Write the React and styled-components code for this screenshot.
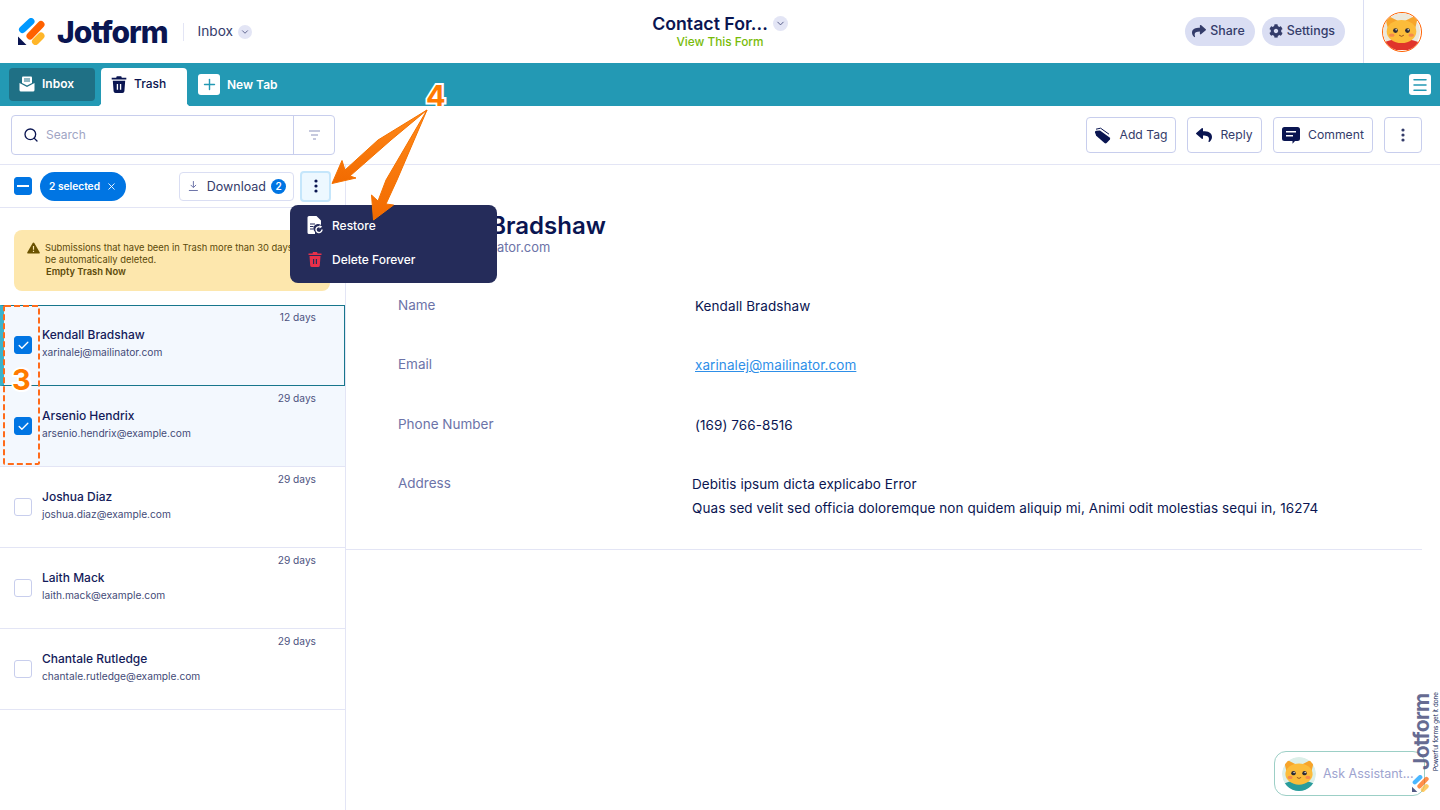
import React from "react";
import styled, { createGlobalStyle } from "styled-components";
import { FaShare, FaCog, FaReply } from "react-icons/fa";
import { Search, X, Check, ChevronDown, Plus, Menu } from "lucide-react";

const navy = "#0a1551";
const font = `Inter, "Liberation Sans", sans-serif`;

const GlobalStyle = createGlobalStyle`
  html, body { margin: 0; padding: 0; height: 100%; overflow: hidden; background: #fff; }
  body { font-family: ${font}; color: ${navy}; }
  * { box-sizing: border-box; }
  #root { height: 100%; }
`;

const submissions = [
  { name: "Kendall Bradshaw", email: "xarinalej@mailinator.com", age: "12 days", checked: true, active: true },
  { name: "Arsenio Hendrix", email: "arsenio.hendrix@example.com", age: "29 days", checked: true },
  { name: "Joshua Diaz", email: "joshua.diaz@example.com", age: "29 days" },
  { name: "Laith Mack", email: "laith.mack@example.com", age: "29 days" },
  { name: "Chantale Rutledge", email: "chantale.rutledge@example.com", age: "29 days" },
];

const LogoMark = ({ size = 27 }) => (
  <svg width={size} height={size} viewBox="0 0 27 27">
    <path d="M0 18.5 V27 H8.5 Z" fill={navy} />
    <path d="M4.5 11.5 L13 3.5" stroke="#0099ff" strokeWidth="7" strokeLinecap="round" />
    <path d="M12 18 L23 6.5" stroke="#ff6100" strokeWidth="7" strokeLinecap="round" />
    <path d="M17.5 23.5 L23 18" stroke="#ffb629" strokeWidth="7" strokeLinecap="round" />
  </svg>
);

const CatFace = ({ size, shirt, bg }) => (
  <svg width={size} height={size} viewBox="0 0 40 40">
    <circle cx="20" cy="20" r="20" fill={bg} />
    <path d="M0 40 V33 Q6 28 20 28 Q34 28 40 33 V40 Z" fill={shirt} />
    <path d="M3 3 L15 9 L7 20 Z" fill="#f7a52b" stroke="#f7a52b" strokeWidth="2" strokeLinejoin="round" />
    <path d="M37 3 L25 9 L33 20 Z" fill="#f7a52b" stroke="#f7a52b" strokeWidth="2" strokeLinejoin="round" />
    <ellipse cx="20" cy="20" rx="16" ry="12.5" fill="#fcbc3a" />
    <circle cx="13.5" cy="19" r="2.6" fill="#2c2a33" />
    <circle cx="26.5" cy="19" r="2.6" fill="#2c2a33" />
    <circle cx="14.2" cy="18.2" r=".8" fill="#fff" />
    <circle cx="27.2" cy="18.2" r=".8" fill="#fff" />
    <ellipse cx="9.5" cy="24" rx="3" ry="1.8" fill="#f58a4b" />
    <ellipse cx="30.5" cy="24" rx="3" ry="1.8" fill="#f58a4b" />
    <path d="M17.5 24 Q20 26.5 22.5 24" stroke="#8a4a1c" strokeWidth="1" fill="none" />
  </svg>
);

const TrashIcon = ({ color, size = 18 }) => (
  <svg width={size} height={size} viewBox="0 0 16 16">
    <path d="M1.5 2.5 H5.5 L6 1 H10 L10.5 2.5 H14.5 V4 H1.5 Z" fill={color} />
    <path fillRule="evenodd" d="M2.5 5 H13.5 L12.8 14.5 Q12.7 16 11 16 H5 Q3.3 16 3.2 14.5 Z M6 8 V13 H7.2 V8 Z M8.8 8 V13 H10 V8 Z" fill={color} />
  </svg>
);

const InboxIcon = () => (
  <svg width="16" height="16" viewBox="0 0 16 16">
    <path d="M3 1.5 Q3 .5 4 .5 H12 Q13 .5 13 1.5 V7 L8 9.5 L3 7 Z" fill="#fff" />
    <path d="M5 3 H11 M5 5 H11" stroke="#1f7085" strokeWidth="1.1" />
    <path d="M.5 7 L8 11 L15.5 7 V14 Q15.5 15.5 14 15.5 H2 Q.5 15.5 .5 14 Z" fill="#fff" />
  </svg>
);

const RestoreIcon = () => (
  <svg width="16" height="18" viewBox="0 0 16 18">
    <path d="M2 0 H9.5 L14 4.5 V9 A4.5 4.5 0 0 0 8 16 V18 H2 Q0.5 18 0.5 16.5 V1.5 Q0.5 0 2 0 Z" fill="#fff" />
    <path d="M3 8 H8 M3 10.5 H6.5 M3 13 H6.5" stroke="#252c5a" strokeWidth="1.2" />
    <path d="M15 13.5 A3 3 0 1 1 13.5 11" stroke="#fff" strokeWidth="1.4" fill="none" />
    <path d="M12.5 9 L15.2 10.8 L12.5 12.6 Z" fill="#fff" />
  </svg>
);

const TagIcon = () => (
  <svg width="17" height="17" viewBox="0 0 17 17" fill={navy}>
    <path d="M1 5.5 Q.7 4 2.2 3.8 L6 3.5 L15.6 10.6 Q16.6 11.6 15.9 12.6 L12.6 16 Q11.6 16.9 10.5 16 L2.2 8.8 Z" />
    <path d="M2 2.2 L6.6 1.2 L15 7.2" fill="none" stroke={navy} strokeWidth="1" />
  </svg>
);

const CommentIcon = () => (
  <svg width="18" height="17" viewBox="0 0 18 17" fill={navy}>
    <path fillRule="evenodd" d="M2.5 0 H15.5 Q18 0 18 2.5 V11.5 Q18 14 15.5 14 H13 L10.5 16.8 V14 H2.5 Q0 14 0 11.5 V2.5 Q0 0 2.5 0 Z M4 4 V5.6 H14 V4 Z M4 8 V9.6 H11 V8 Z" />
  </svg>
);

const DownloadIcon = () => (
  <svg width="12" height="12" viewBox="0 0 12 12" fill="none" stroke="#6c73a8" strokeWidth="1.1">
    <path d="M6 0.5 V7.5 M3 4.8 L6 7.8 L9 4.8" />
    <path d="M1 11 H11" />
  </svg>
);

const FilterIcon = () => (
  <svg width="13" height="10" viewBox="0 0 13 10" fill="none" stroke="#8d93bd" strokeWidth="1.2">
    <path d="M1 1 H12 M3 5 H10 M5 9 H8" />
  </svg>
);

const WarningIcon = () => (
  <svg width="13" height="12" viewBox="0 0 13 12">
    <path fillRule="evenodd" d="M6.5 0.5 Q7 0.5 7.3 1 L12.8 10.5 Q13 11.5 12.2 11.5 H0.8 Q0 11.5 0.2 10.5 L5.7 1 Q6 0.5 6.5 0.5 Z M5.9 4 V7.8 H7.1 V4 Z M5.9 8.8 V10 H7.1 V8.8 Z" fill="#6a5200" />
  </svg>
);

const Dots = ({ color = navy }) => (
  <svg width="4" height="14" viewBox="0 0 4 14" fill={color}>
    <circle cx="2" cy="2" r="1.6" />
    <circle cx="2" cy="7" r="1.6" />
    <circle cx="2" cy="12" r="1.6" />
  </svg>
);

const Page = styled.div`
  position: relative;
  height: 810px;
  width: 1440px;
  display: flex;
  flex-direction: column;
  overflow: hidden;
`;

const Header = styled.header`
  height: 63px;
  display: grid;
  grid-template-columns: 1fr auto 1fr;
  align-items: center;
  background: #fff;
`;

const Brand = styled.div`
  display: flex;
  align-items: center;
  padding-left: 18px;
`;

const Wordmark = styled.span`
  font-size: 30px;
  font-weight: 800;
  letter-spacing: -1px;
  margin-left: 12px;
  color: ${navy};
`;

const BrandDivider = styled.span`
  width: 1px;
  height: 18px;
  background: #e3e5f5;
  margin: 0 14px 0 15px;
`;

const HeaderLabel = styled.span`
  font-size: 13.7px;
  line-height: 16px;
  padding-bottom: 2px;
  color: #343c6a;
`;

const ChevronDot = styled.span`
  width: ${p => p.$size}px;
  height: ${p => p.$size}px;
  border-radius: 50%;
  background: #e3e5f5;
  margin-left: 5px;
  display: inline-flex;
  align-items: center;
  justify-content: center;
  color: #4c5280;
`;

const FormTitle = styled.div`
  display: flex;
  flex-direction: column;
  align-items: center;
  margin-top: -4px;
`;

const TitleRow = styled.div`
  display: flex;
  align-items: center;
  font-size: 17.7px;
  font-weight: 600;
  line-height: 24px;
  color: ${navy};
`;

const ViewLink = styled.a`
  font-size: 11.8px;
  line-height: 12px;
  font-weight: 500;
  color: #78bb07;
`;

const HeaderRight = styled.div`
  display: flex;
  align-items: center;
  justify-content: flex-end;
  height: 100%;
`;

const Pill = styled.button`
  height: 29px;
  padding: 0 10px 2px 7px;
  margin-left: 7px;
  border: 0;
  border-radius: 15px;
  background: #dadef3;
  color: #343c6a;
  font-family: inherit;
  font-size: 12.4px;
  font-weight: 500;
  display: flex;
  align-items: center;
  gap: 4px;
`;

const AvatarCell = styled.div`
  height: 100%;
  margin-left: 18px;
  padding: 12px 18px 0 18px;
  border-left: 1px solid #dadef3;
`;

const Avatar = styled.div`
  width: 40px;
  height: 40px;
  border-radius: 50%;
  border: 1.5px solid #ff6100;
  overflow: hidden;
  line-height: 0;
`;

const TabBar = styled.nav`
  height: 43px;
  background: #2399b4;
  display: flex;
  align-items: flex-start;
  padding: 5px 9px 0;
  font-size: 12px;
  font-weight: 600;
`;

const Tab = styled.div`
  position: relative;
  width: 86px;
  height: ${p => (p.$open ? 38 : 33)}px;
  margin-right: 6px;
  border-radius: ${p => (p.$open ? "4px 4px 0 0" : "4px")};
  background: ${p => (p.$open ? "#fff" : "#1f7085")};
  color: ${p => (p.$open ? navy : "#fff")};
  padding-left: ${p => (p.$open ? 9 : 10)}px;
  padding-bottom: ${p => (p.$open ? 7 : 2)}px;
  display: flex;
  align-items: center;
  gap: ${p => (p.$open ? 6 : 7)}px;
  font-weight: ${p => (p.$open ? 500 : 600)};
  &::before,
  &::after {
    content: ${p => (p.$open ? '""' : "none")};
    position: absolute;
    bottom: 0;
    width: 4px;
    height: 4px;
  }
  &::before {
    left: -4px;
    background: radial-gradient(circle at 0 0, #2399b4 4px, #fff 4.5px);
  }
  &::after {
    right: -4px;
    background: radial-gradient(circle at 100% 0, #2399b4 4px, #fff 4.5px);
  }
`;

const NewTab = styled.div`
  display: flex;
  align-items: center;
  gap: 7px;
  height: 33px;
  margin-left: 5px;
  color: #fff;
`;

const WhiteSquare = styled.span`
  width: 22px;
  height: 21px;
  background: #fff;
  border-radius: 3px;
  color: #2399b4;
  display: inline-flex;
  align-items: center;
  justify-content: center;
`;

const TabMenu = styled(WhiteSquare)`
  margin: 6px 0 0 auto;
`;

const ToolRow = styled.div`
  height: 59px;
  border-bottom: 1px solid #e3e5f5;
  display: flex;
  align-items: center;
  justify-content: space-between;
  padding: 0 18px 0 11px;
`;

const SearchBox = styled.div`
  width: 324px;
  height: 40px;
  border: 1px solid #c8ceed;
  border-radius: 4px;
  display: flex;
  align-items: center;
  padding-left: 11px;
  gap: 7px;
  font-size: 12px;
  line-height: 14px;
  color: #a0a5c4;
`;

const SearchHint = styled.span`
  padding-bottom: 1px;
`;

const FilterCell = styled.span`
  margin-left: auto;
  width: 41px;
  height: 100%;
  border-left: 1px solid #c8ceed;
  display: flex;
  align-items: center;
  justify-content: center;
`;

const Actions = styled.div`
  display: flex;
  gap: 11px;
`;

const ActionButton = styled.button`
  width: ${p => p.$w}px;
  height: 36px;
  padding: 0;
  border: 1px solid #c8ceed;
  border-radius: 4px;
  background: #fff;
  color: #343c6a;
  font-family: inherit;
  font-size: 12.2px;
  line-height: 14px;
  display: flex;
  align-items: center;
  justify-content: center;
  gap: 8px;
`;

const ActionText = styled.span`
  padding-bottom: 1px;
`;

const Columns = styled.div`
  flex: 1;
  display: grid;
  grid-template-columns: 346px 1fr;
  min-height: 0;
`;

const Sidebar = styled.aside`
  border-right: 1px solid #e3e5f5;
`;

const SelectionBar = styled.div`
  height: 43px;
  border-bottom: 1px solid #e3e5f5;
  display: flex;
  align-items: center;
  padding: 0 14px;
`;

const Checkbox = styled.span`
  width: 18px;
  height: 18px;
  flex: none;
  border-radius: 3px;
  background: ${p => (p.$on ? "#0075e3" : "#fff")};
  border: 1px solid ${p => (p.$on ? "#0075e3" : "#c8ceed")};
  color: #fff;
  display: inline-flex;
  align-items: center;
  justify-content: center;
`;

const Dash = styled.span`
  width: 12px;
  height: 2px;
  background: #fff;
`;

const Chip = styled.span`
  margin-left: 8px;
  width: 86px;
  height: 29px;
  border-radius: 15px;
  background: #0075e3;
  color: #fff;
  font-size: 10.2px;
  font-weight: 600;
  display: flex;
  align-items: center;
  justify-content: center;
  gap: 6px;
`;

const DownloadButton = styled.button`
  margin-left: auto;
  width: 115px;
  height: 29px;
  border: 1px solid #dadef3;
  border-radius: 4px;
  background: #fff;
  color: #343c6a;
  font-family: inherit;
  font-size: 12.5px;
  display: flex;
  align-items: center;
  padding: 0 7px 0 8px;
  gap: 8px;
`;

const CountBadge = styled.span`
  width: 15px;
  height: 15px;
  flex: none;
  border-radius: 50%;
  background: #0075e3;
  color: #fff;
  font-size: 10px;
  font-weight: 600;
  margin-left: -3px;
  display: flex;
  align-items: center;
  justify-content: center;
`;

const MoreButton = styled.button`
  width: 31px;
  height: 31px;
  margin-left: 6px;
  border: 2px solid #c5e6fb;
  border-radius: 4px;
  background: #edf8ff;
  display: flex;
  align-items: center;
  justify-content: center;
  padding: 0;
`;

const Notice = styled.div`
  margin: 22px 15px 14px 14px;
  height: 61px;
  border-radius: 8px;
  background: #fde7ad;
  padding: 12px 16px 0 13px;
  display: flex;
  gap: 5px;
  font-size: 9.4px;
  line-height: 12px;
  color: #5c4a0a;
`;

const NoticeLink = styled.div`
  font-weight: 600;
  margin-left: 1px;
`;

const IconSlot = styled.span`
  flex: none;
`;

const Row = styled.div`
  position: relative;
  height: 81px;
  padding-top: 6px;
  background: ${p => (p.$checked ? "#f3f8fe" : "#fff")};
  border-bottom: 1px solid #e3e5f5;
  display: flex;
  flex-direction: column;
  &::after {
    content: ${p => (p.$active ? '""' : "none")};
    position: absolute;
    inset: 0 0 -1px 0;
    border: 1px solid #17768c;
    border-left: 4px solid #3bb3cb;
  }
`;

const Age = styled.div`
  align-self: flex-end;
  margin-right: 29px;
  font-size: 10.2px;
  line-height: 13px;
  color: #4c5280;
`;

const RowBody = styled.div`
  display: flex;
  align-items: center;
  gap: 10px;
  padding-left: 14px;
  margin-top: 2px;
`;

const RowText = styled.div`
  padding-bottom: 3px;
`;

const Name = styled.div`
  font-size: 12px;
  font-weight: 500;
  line-height: 17px;
  color: #141b5a;
`;

const Email = styled.div`
  font-size: 10.2px;
  line-height: 18px;
  color: #434a77;
`;

const Detail = styled.main`
  padding-right: 18px;
`;

const DetailHead = styled.div`
  padding: 45px 0 0 52px;
  height: 128px;
`;

const DetailName = styled.h1`
  margin: 0;
  font-size: 24px;
  line-height: 32px;
  font-weight: 600;
  color: ${navy};
`;

const DetailEmail = styled.div`
  font-size: 12.9px;
  line-height: 12px;
  color: #6c73a8;
`;

const Fields = styled.div`
  padding: 0 0 30px 52px;
  border-bottom: 1px solid #e3e5f5;
`;

const Field = styled.div`
  display: grid;
  grid-template-columns: 297px 1fr;
  height: ${p => p.$height || 59.33}px;
  font-size: 13.5px;
  line-height: 24px;
`;

const FieldLabel = styled.div`
  color: #6c73a8;
`;

const FieldValue = styled.div`
  margin-left: ${p => (p.$pull ? -3 : 0)}px;
  margin-top: 1px;
  letter-spacing: 0.08px;
  color: ${navy};
`;

const MailLink = styled.a`
  color: #2e8fe8;
  text-decoration: underline;
`;

const ActionMenu = styled.div`
  position: absolute;
  left: 290px;
  top: 205px;
  width: 207px;
  height: 78px;
  padding: 3px 0;
  border-radius: 8px;
  background: #252c5a;
  color: #fff;
  font-size: 12px;
  font-weight: 500;
`;

const MenuItem = styled.div`
  height: 34px;
  padding-left: 17px;
  display: flex;
  align-items: center;
  gap: 9px;
`;

const ArrowLayer = styled.svg`
  position: absolute;
  inset: 0;
  pointer-events: none;
`;

const Callout = styled.span`
  position: absolute;
  left: ${p => p.$x}px;
  top: ${p => p.$y}px;
  font-size: 29px;
  line-height: 30px;
  font-weight: 700;
  color: #ff7a00;
  -webkit-text-stroke: 4px #fff;
  paint-order: stroke fill;
`;

const Assistant = styled.div`
  position: absolute;
  left: 1274px;
  top: 751px;
  width: 151px;
  height: 45px;
  border: 1px solid #9ccfc6;
  border-radius: 12px;
  background: #fff;
  display: flex;
  align-items: center;
  padding-left: 7px;
  gap: 7px;
  font-size: 12.5px;
  color: #9ea4cf;
`;

const CatClip = styled.span`
  width: 34px;
  height: 34px;
  border-radius: 50%;
  overflow: hidden;
  line-height: 0;
`;

const Badge = styled.div`
  position: absolute;
  left: 1412px;
  top: 692px;
  display: flex;
  flex-direction: column;
  align-items: flex-start;
`;

const BadgeText = styled.div`
  display: flex;
  flex-direction: column;
  writing-mode: vertical-rl;
  transform: rotate(180deg);
  align-items: center;
  height: 79px;
  gap: 2px;
  color: #4c5280;
`;

const BadgeWord = styled.span`
  font-size: 21px;
  font-weight: 700;
  line-height: 19px;
  letter-spacing: -0.6px;
  opacity: 0.85;
`;

const BadgeTag = styled.span`
  font-size: 6.3px;
  line-height: 7px;
  color: ${navy};
  white-space: nowrap;
`;

const BadgeLogo = styled.span`
  margin-top: 4px;
  line-height: 0;
  opacity: 0.7;
`;

const App = () => (
  <Page>
    <GlobalStyle />
    <Header>
      <Brand>
        <LogoMark />
        <Wordmark>Jotform</Wordmark>
        <BrandDivider />
        <HeaderLabel>Inbox</HeaderLabel>
        <ChevronDot $size={14}><ChevronDown size={10} /></ChevronDot>
      </Brand>
      <FormTitle>
        <TitleRow>
          Contact For...
          <ChevronDot $size={15}><ChevronDown size={11} /></ChevronDot>
        </TitleRow>
        <ViewLink>View This Form</ViewLink>
      </FormTitle>
      <HeaderRight>
        <Pill><FaShare size={14} />Share</Pill>
        <Pill><FaCog size={14} />Settings</Pill>
        <AvatarCell>
          <Avatar><CatFace size={37} shirt="#e0352b" bg="#ece8da" /></Avatar>
        </AvatarCell>
      </HeaderRight>
    </Header>

    <TabBar>
      <Tab><InboxIcon />Inbox</Tab>
      <Tab $open><TrashIcon color={navy} />Trash</Tab>
      <NewTab>
        <WhiteSquare><Plus size={17} /></WhiteSquare>
        New Tab
      </NewTab>
      <TabMenu><Menu size={18} /></TabMenu>
    </TabBar>

    <ToolRow>
      <SearchBox>
        <Search size={16} color={navy} />
        <SearchHint>Search</SearchHint>
        <FilterCell><FilterIcon /></FilterCell>
      </SearchBox>
      <Actions>
        <ActionButton $w={90}><TagIcon /><ActionText>Add Tag</ActionText></ActionButton>
        <ActionButton $w={75}><FaReply size={16} color={navy} /><ActionText>Reply</ActionText></ActionButton>
        <ActionButton $w={100}><CommentIcon /><ActionText>Comment</ActionText></ActionButton>
        <ActionButton $w={38}><Dots color="#343c6a" /></ActionButton>
      </Actions>
    </ToolRow>

    <Columns>
      <Sidebar>
        <SelectionBar>
          <Checkbox $on><Dash /></Checkbox>
          <Chip>2 selected <X size={11} /></Chip>
          <DownloadButton>
            <DownloadIcon />
            Download
            <CountBadge>2</CountBadge>
          </DownloadButton>
          <MoreButton><Dots /></MoreButton>
        </SelectionBar>
        <Notice>
          <IconSlot><WarningIcon /></IconSlot>
          <div>
            Submissions that have been in Trash more than 30 days will be automatically deleted.
            <NoticeLink>Empty Trash Now</NoticeLink>
          </div>
        </Notice>
        {submissions.map(s => (
          <Row key={s.email} $checked={s.checked} $active={s.active}>
            <Age>{s.age}</Age>
            <RowBody>
              <Checkbox $on={s.checked}>{s.checked && <Check size={13} strokeWidth={2.5} />}</Checkbox>
              <RowText>
                <Name>{s.name}</Name>
                <Email>{s.email}</Email>
              </RowText>
            </RowBody>
          </Row>
        ))}
      </Sidebar>

      <Detail>
        <DetailHead>
          <DetailName>Kendall Bradshaw</DetailName>
          <DetailEmail>xarinalej@mailinator.com</DetailEmail>
        </DetailHead>
        <Fields>
          <Field>
            <FieldLabel>Name</FieldLabel>
            <FieldValue>Kendall Bradshaw</FieldValue>
          </Field>
          <Field>
            <FieldLabel>Email</FieldLabel>
            <FieldValue><MailLink>xarinalej@mailinator.com</MailLink></FieldValue>
          </Field>
          <Field>
            <FieldLabel>Phone Number</FieldLabel>
            <FieldValue>(169) 766-8516</FieldValue>
          </Field>
          <Field $height={48}>
            <FieldLabel>Address</FieldLabel>
            <FieldValue $pull>
              Debitis ipsum dicta explicabo Error
              <br />
              Quas sed velit sed officia doloremque non quidem aliquip mi, Animi odit molestias sequi in, 16274
            </FieldValue>
          </Field>
        </Fields>
      </Detail>
    </Columns>

    <ActionMenu>
      <MenuItem><RestoreIcon />Restore</MenuItem>
      <MenuItem><TrashIcon color="#e8304a" size={16} />Delete Forever</MenuItem>
    </ActionMenu>

    <Assistant>
      <CatClip><CatFace size={34} shirt="#2a9c9c" bg="#dcefe9" /></CatClip>
      Ask Assistant...
    </Assistant>
    <Badge>
      <BadgeText>
        <BadgeWord>Jotform</BadgeWord>
        <BadgeTag>Powerful forms get it done</BadgeTag>
      </BadgeText>
      <BadgeLogo><LogoMark size={17} /></BadgeLogo>
    </Badge>

    <ArrowLayer width="1440" height="810" viewBox="0 0 1440 810">
      <defs>
        <linearGradient id="arrowFill" x1="0" y1="0" x2="0" y2="1">
          <stop offset="0" stopColor="#ff8a1a" />
          <stop offset="1" stopColor="#f26a00" />
        </linearGradient>
      </defs>
      <rect x="4" y="306" width="35" height="158" rx="1" fill="none" stroke="#ff6b1a" strokeWidth="2" strokeDasharray="6 3" />
      <path d="M427 110 L391 140 L350 176 L356 178 L332 183.5 L342 160.5 L345 170 L378 140 Z" fill="url(#arrowFill)" stroke="#f57200" strokeWidth="1" strokeLinejoin="round" />
      <path d="M427 110 L397 180 L386 204 L393.5 205 L373.5 220 L371.5 195 L378 201 L386 180 Z" fill="url(#arrowFill)" stroke="#f57200" strokeWidth="1" strokeLinejoin="round" />
    </ArrowLayer>
    <Callout $x={426} $y={81}>4</Callout>
    <Callout $x={12} $y={365}>3</Callout>
  </Page>
);

export default App;
